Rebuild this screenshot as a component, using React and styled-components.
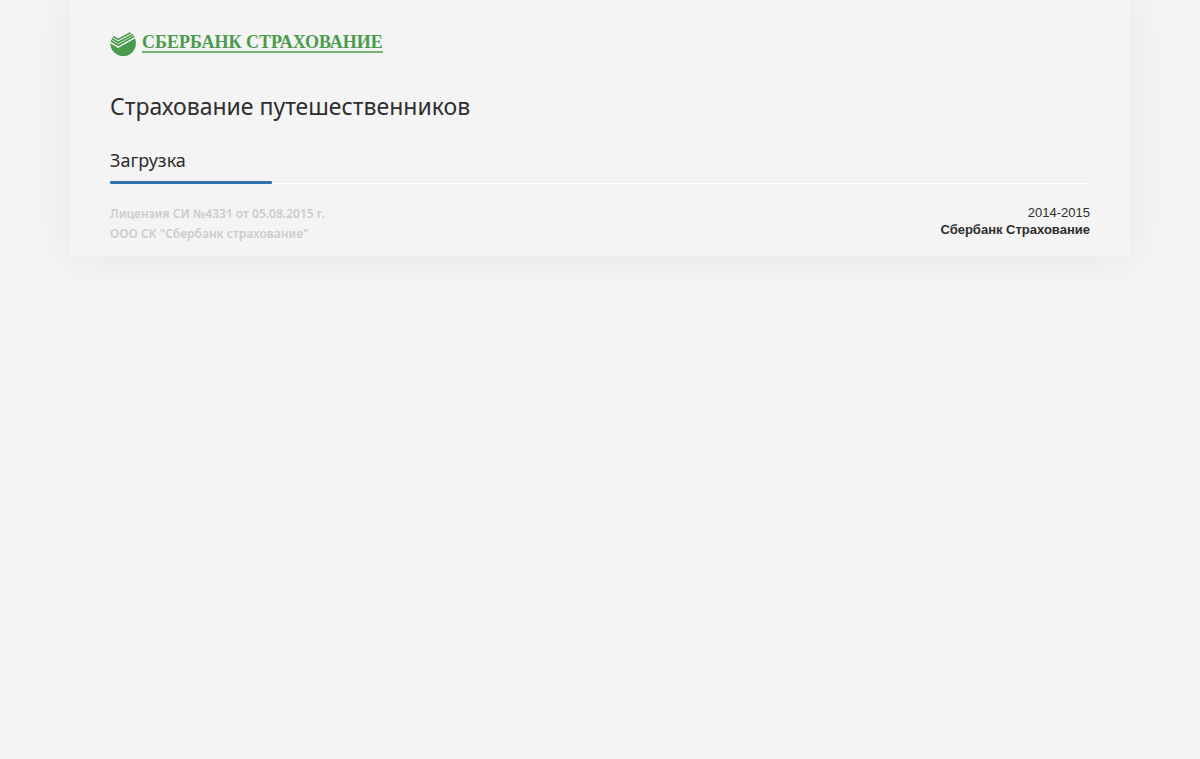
import React from "react";
import styled, { createGlobalStyle } from "styled-components";

const GlobalStyle = createGlobalStyle`
  *, *::before, *::after { box-sizing: border-box; }
  body {
    margin: 0;
    background: #f4f4f4;
    color: #2e2e2e;
    font-family: "Noto Sans", sans-serif;
  }
`;

const Page = styled.div`
  min-height: 100vh;
`;

const Card = styled.div`
  max-width: 1060px;
  margin: 0 auto;
  padding: 31px 40px 12px;
  background: #f4f4f4;
  box-shadow: 0 0 40px rgba(0, 0, 0, 0.06);
`;

const LogoLink = styled.a`
  display: flex;
  width: fit-content;
  align-items: flex-start;
  gap: 6px;
  color: #4a9b4b;
  text-decoration: none;
`;

const LogoMark = styled.svg`
  display: block;
  width: 26px;
  height: 27px;
`;

const LogoName = styled.span`
  height: 22px;
  border-bottom: 2px solid #72b274;
  font: bold 18px/22px "Liberation Serif", serif;
  white-space: nowrap;
`;

const Title = styled.h1`
  margin: 30px 0 0;
  font-size: 23px;
  line-height: 36px;
  font-weight: 400;
`;

const Status = styled.h2`
  margin: 24px 0 0;
  font-size: 18px;
  line-height: 24px;
  font-weight: 400;
`;

const Track = styled.div`
  height: 3px;
  margin-top: 9px;
  border-top: 1px solid #e9e9e9;
  background: linear-gradient(#f8f8f8, #ffffff);
`;

const Bar = styled.div`
  height: 3px;
  margin-top: -1px;
  border-radius: 1px;
  background: #3071b0;
`;

const Footer = styled.footer`
  display: flex;
  justify-content: space-between;
  gap: 20px;
  margin-top: 20px;
`;

const License = styled.p`
  margin: 0;
  color: #cccccc;
  font-size: 12px;
  line-height: 20px;
  font-weight: 600;
`;

const Copyright = styled.p`
  margin: 0;
  font: 13px/17px "Liberation Sans", sans-serif;
  text-align: right;
`;

function Logo() {
  return (
    <LogoLink href="#" aria-label="Сбербанк Страхование">
      <LogoMark viewBox="0 0 26 27" aria-hidden="true">
        <path
          d="M.3 12.2L8 17L25 7.6A12.8 12.8 0 1 1 .3 12.2Z"
          fill="#4a9b4b"
        />
        <g fill="none" stroke="#4a9b4b" strokeWidth="1.7">
          <path d="M3.2 5.6L8.2 8.4L20.5 1.7" />
          <path d="M1.8 7.6L8.2 11.4L22.7 3.4" />
          <path d="M.8 9.8L8.2 14.3L24.3 5.3" />
        </g>
      </LogoMark>
      <LogoName>СБЕРБАНК СТРАХОВАНИЕ</LogoName>
    </LogoLink>
  );
}

function Progress({ value }) {
  return (
    <Track
      role="progressbar"
      aria-labelledby="status"
      aria-valuemin={0}
      aria-valuemax={100}
      aria-valuenow={value}
    >
      <Bar style={{ width: `${value}%` }} />
    </Track>
  );
}

export default function App() {
  return (
    <Page>
      <GlobalStyle />
      <Card>
        <header>
          <Logo />
        </header>
        <main>
          <Title>Страхование путешественников</Title>
          <Status id="status">Загрузка</Status>
          <Progress value={16.5} />
        </main>
        <Footer>
          <License>
            Лицензия СИ №4331 от 05.08.2015 г.
            <br />
            ООО СК "Сбербанк страхование"
          </License>
          <Copyright>
            2014-2015
            <br />
            <strong>Сбербанк Страхование</strong>
          </Copyright>
        </Footer>
      </Card>
    </Page>
  );
}
